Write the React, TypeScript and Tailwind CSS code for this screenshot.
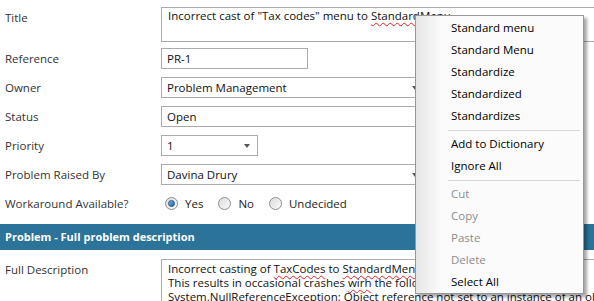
import React from 'react';

const font = { fontFamily: '"Open Sans", "Noto Sans", Arial, sans-serif' };

function Squiggle({ children }: { children: React.ReactNode }) {
  return (
    <span className="underline decoration-wavy decoration-[#e0201f] decoration-1 underline-offset-2">
      {children}
    </span>
  );
}

function Arrow({ className = '' }: { className?: string }) {
  return (
    <span
      className={`absolute top-1/2 -translate-y-1/2 w-0 h-0 border-l-[3.5px] border-r-[3.5px] border-t-[4px] border-l-transparent border-r-transparent border-t-[#555] ${className}`}
    />
  );
}

function Radio({ checked, label }: { checked?: boolean; label: string }) {
  return (
    <label className="flex items-center gap-[7px]">
      <span className="w-[13px] h-[13px] rounded-full border border-[#8c8f92] bg-gradient-to-br from-[#dcdcdc] to-[#fafafa] flex items-center justify-center">
        {checked && (
          <span className="w-[7px] h-[7px] rounded-full bg-gradient-to-br from-[#79b6e6] to-[#1a5fa5] border border-[#24568c]" />
        )}
      </span>
      <span>{label}</span>
    </label>
  );
}

function Row({ label, children }: { label: string; children: React.ReactNode }) {
  return (
    <div className="flex items-center h-[21px] mb-[8px]">
      <div className="w-[161px] shrink-0 pl-[5px] text-[#333]">{label}</div>
      {children}
    </div>
  );
}

const boxClass =
  'relative shrink-0 h-[21px] border border-[#ababab] bg-white flex items-center px-[5px] text-[#111]';

export default function App() {
  const suggestions = ['Standard menu', 'Standard Menu', 'Standardize', 'Standardized', 'Standardizes'];

  return (
    <div className="relative w-[594px] h-[301px] overflow-hidden bg-white text-[11.5px] leading-[14px]" style={font}>
      {/* Title */}
      <div className="flex pt-[7px] h-[48px]">
        <div className="w-[161px] shrink-0 pl-[5px] pt-[1px] text-[#333] leading-[20px]">Title</div>
        <div className="flex-1 min-w-0 h-[35px] border border-r-0 border-[#ababab] px-[6px] pt-[1px] text-[#111] whitespace-nowrap overflow-hidden">
          Incorrect cast of "Tax codes" menu to <Squiggle>StandardMenu</Squiggle>
        </div>
      </div>

      <Row label="Reference">
        <div className={`${boxClass} w-[147px] bg-[#f0f0f0]`}>PR-1</div>
      </Row>
      <Row label="Owner">
        <div className={`${boxClass} w-[262px]`}>
          Problem Management
          <Arrow className="left-[250px]" />
        </div>
      </Row>
      <Row label="Status">
        <div className={`${boxClass} w-[262px]`}>Open</div>
      </Row>
      <Row label="Priority">
        <div className={`${boxClass} w-[97px]`}>
          1
          <Arrow className="left-[82px]" />
        </div>
      </Row>
      <Row label="Problem Raised By">
        <div className={`${boxClass} w-[262px]`}>
          Davina Drury
          <Arrow className="left-[250px]" />
        </div>
      </Row>

      {/* Workaround */}
      <div className="flex items-center h-[21px] mt-[1px]">
        <div className="w-[161px] shrink-0 pl-[5px] text-[#333]">Workaround Available?</div>
        <div className="flex items-center gap-[15px] pl-[4px] text-[#222]">
          <Radio checked label="Yes" />
          <Radio label="No" />
          <Radio label="Undecided" />
        </div>
      </div>

      {/* Section header */}
      <div className="mt-[10px] h-[26px] bg-[#2b7398] text-white text-[11px] font-bold flex items-center pl-[5px]">
        Problem - Full problem description
      </div>

      {/* Full description */}
      <div className="flex pt-[9px]">
        <div className="w-[161px] shrink-0 pl-[5px] pt-[1px] text-[#333] leading-[20px]">Full Description</div>
        <div className="flex-1 min-w-0 h-[60px] border border-r-0 border-[#ababab] px-[6px] pt-[2px] text-[#111] whitespace-nowrap overflow-hidden">
          <div>
            Incorrect casting of <Squiggle>TaxCodes</Squiggle> to <Squiggle>StandardMenu</Squiggle>
          </div>
          <div>
            This results in occasional crashes <Squiggle>wirh</Squiggle> the following error:
          </div>
          <div>
            System.<Squiggle>NullReferenceException</Squiggle>: Object reference not set to an instance of an object
          </div>
        </div>
      </div>

      {/* Context menu */}
      <div className="absolute left-[415px] top-[15px] w-[169px] h-[279px] border border-[#979797] bg-[#fbfbfb] shadow-[3px_3px_3px_rgba(0,0,0,0.35)] py-[1px]">
        <div className="absolute left-0 top-0 bottom-0 w-[26px] bg-gradient-to-r from-[#e6e6e6] to-[#fbfbfb]" />
        <div className="relative">
          {suggestions.map((s) => (
            <div key={s} className="h-[22px] flex items-center pl-[35px] text-black">
              {s}
            </div>
          ))}
          <div className="h-[6px] flex items-center ml-[32px] mr-[3px]">
            <div className="w-full h-[1px] bg-[#d7d7d7]" />
          </div>
          <div className="h-[22px] flex items-center pl-[35px] text-black">Add to Dictionary</div>
          <div className="h-[22px] flex items-center pl-[35px] text-black">Ignore All</div>
          <div className="h-[6px] flex items-center ml-[32px] mr-[3px]">
            <div className="w-full h-[1px] bg-[#d7d7d7]" />
          </div>
          {['Cut', 'Copy', 'Paste', 'Delete'].map((s) => (
            <div key={s} className="h-[22px] flex items-center pl-[35px] text-[#8d8d8d]">
              {s}
            </div>
          ))}
          <div className="h-[22px] flex items-center pl-[35px] text-black">Select All</div>
        </div>
      </div>
    </div>
  );
}
